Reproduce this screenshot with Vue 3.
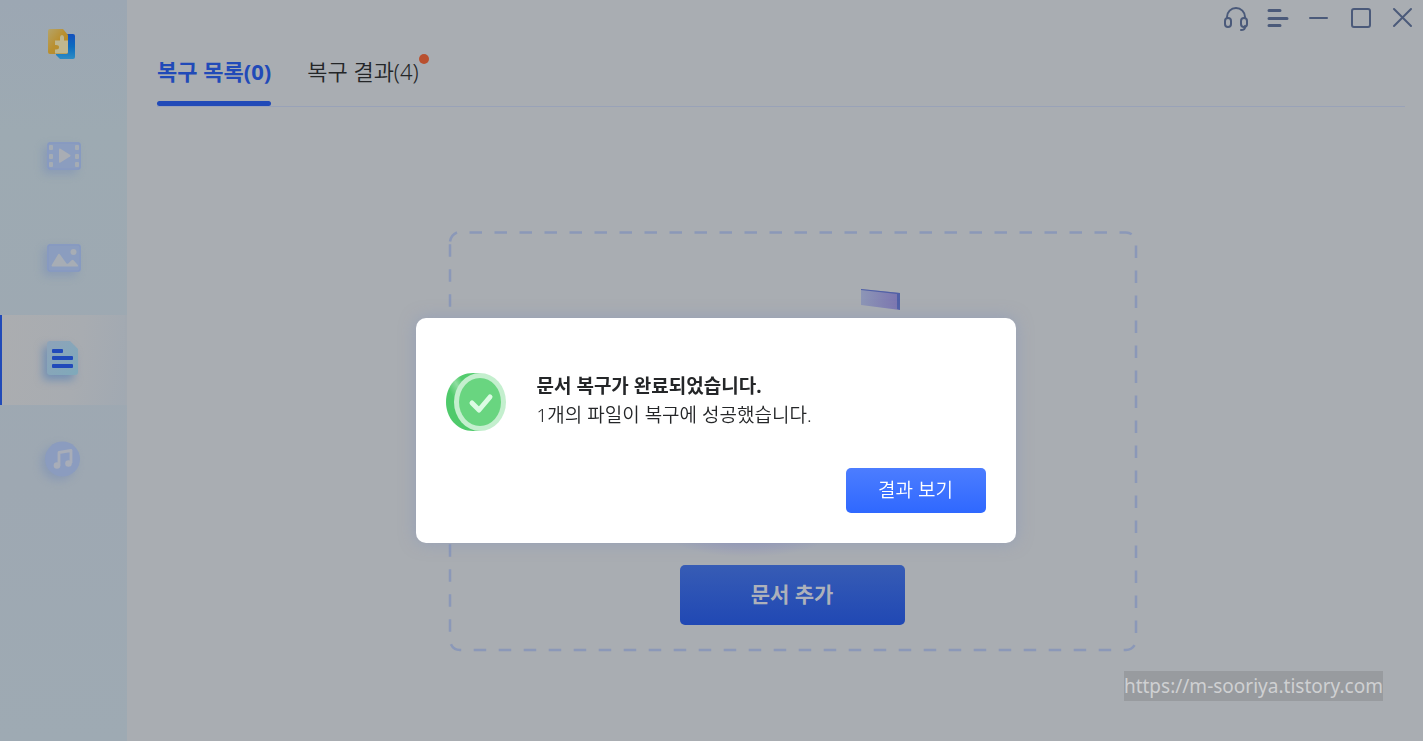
<script setup>
import { ref } from 'vue';

const listCount = ref(0);
const resultCount = ref(4);
const activeTab = ref('list');
const activeMenu = ref('document');
const showDialog = ref(true);

const menus = [
  { id: 'video', label: '비디오' },
  { id: 'photo', label: '사진' },
  { id: 'document', label: '문서' },
  { id: 'audio', label: '오디오' },
];

const openResult = () => {
  showDialog.value = false;
  activeTab.value = 'result';
};
</script>

<template>
  <div class="app">
    <aside class="sidebar">
      <svg class="logo" width="32" height="34" viewBox="2 0 32 34">
        <defs>
          <linearGradient id="logo-blue" x1="0" y1="0" x2="0" y2="1">
            <stop offset="0" stop-color="#1450bd" />
            <stop offset="0.5" stop-color="#0b6bc0" />
            <stop offset="1" stop-color="#2d8cc4" />
          </linearGradient>
          <linearGradient id="logo-gold" x1="0" y1="0" x2="1" y2="1">
            <stop offset="0" stop-color="#b5a469" />
            <stop offset="0.5" stop-color="#b98f2f" />
            <stop offset="1" stop-color="#b88a28" />
          </linearGradient>
        </defs>
        <path d="M12 6h15q2 0 2 2v21q0 2-2 2H14l-4-4V9z" fill="url(#logo-blue)" />
        <path d="M4 1h13l5 6v17q0 2-2 2H4q-2 0-2-2V3q0-2 2-2z" fill="url(#logo-gold)" />
        <path d="M9 12.500h5V9.500q0-2.500 2-2.500t2 2.500v3h4V24q0 1.500-1.500 1.500H9v-4h1q3 0 3-2.200T10 17H9z" fill="#beb68f" />
      </svg>

      <nav class="menu">
        <button
          v-for="menu in menus"
          :key="menu.id"
          class="menu-item"
          :class="{ active: activeMenu === menu.id }"
          :aria-label="menu.label"
          @click="activeMenu = menu.id"
        >
          <svg v-if="menu.id === 'video'" class="menu-icon" width="36" height="36" viewBox="0 0 36 36">
            <rect x="1" y="4" width="34" height="28" rx="3" fill="#8b9dbf" />
            <rect x="2" y="5" width="32" height="26" rx="2" fill="none" stroke="#8497c2" />
            <path d="M13 11.500q0-1.500 1.500-.8l9.500 6q1.300.9 0 1.800l-9.500 6Q13 25.300 13 24z" fill="#a9adb4" />
            <g fill="#a5acb4">
              <rect x="3" y="7" width="4" height="5" rx="1" />
              <rect x="3" y="16" width="4" height="5" rx="1" />
              <rect x="3" y="24" width="4" height="5" rx="1" />
              <rect x="29" y="7" width="4" height="5" rx="1" />
              <rect x="29" y="16" width="4" height="5" rx="1" />
              <rect x="29" y="24" width="4" height="5" rx="1" />
            </g>
          </svg>
          <svg v-else-if="menu.id === 'photo'" class="menu-icon" width="36" height="36" viewBox="0 0 36 36">
            <rect x="1" y="4" width="34" height="28" rx="3" fill="#8b9dbf" />
            <rect x="2" y="5" width="32" height="26" rx="2" fill="none" stroke="#8497c2" />
            <circle cx="27.500" cy="12" r="3" fill="#a7adb5" />
            <path d="M6 26.500q-1-.5 0-2l6-10q1-1.500 2 0l6.500 9q1 .8 2-.2l3-3q1.200-1 2.300.2l4 4.500q1 1.500-.5 1.500z" fill="#a7adb5" />
          </svg>
          <svg v-else-if="menu.id === 'document'" class="menu-icon strong" width="36" height="36" viewBox="0 0 36 36">
            <defs>
              <linearGradient id="doc" x1="0" y1="0" x2="1" y2="1">
                <stop offset="0" stop-color="#8ea3b9" />
                <stop offset="1" stop-color="#7fa9ba" />
              </linearGradient>
            </defs>
            <path d="M4 -1h20l8 8v23q0 3-3 3H4q-3 0-3-3V2q0-3 3-3z" fill="url(#doc)" />
            <g fill="#214aba">
              <rect x="6" y="7" width="11" height="4" rx="1" />
              <rect x="6" y="14" width="21" height="4" rx="1" />
              <rect x="6" y="22" width="21" height="4" rx="1" />
            </g>
          </svg>
          <svg v-else class="menu-icon" width="36" height="36" viewBox="0 0 36 36">
            <circle cx="16.500" cy="15" r="17.500" fill="#8b9cbf" />
            <path d="M13 21.500V8.500l12-2V19" fill="none" stroke="#a8adb8" stroke-width="2.800" stroke-linejoin="round" />
            <circle cx="11" cy="21.500" r="3.300" fill="#a8adb8" />
            <circle cx="22.500" cy="19.500" r="3.300" fill="#a8adb8" />
          </svg>
        </button>
      </nav>
    </aside>

    <main class="content">
      <div class="window-controls">
        <button aria-label="고객 지원">
          <svg width="26" height="26" viewBox="0 0 26 26">
            <path d="M5 13V12a9 9 0 0 1 18 0v1" />
            <rect x="3" y="13" width="6" height="9" rx="3" />
            <rect x="19" y="13" width="6" height="9" rx="3" />
            <path d="M23 21v1q0 3-4 3" />
          </svg>
        </button>
        <button aria-label="메뉴">
          <svg width="26" height="26" viewBox="0 0 26 26">
            <path d="M5 5.500h11M5 13.500h18M5 20.500h11" stroke-width="3" />
          </svg>
        </button>
        <button aria-label="최소화">
          <svg width="26" height="26" viewBox="0 0 26 26"><path d="M4 13h17" /></svg>
        </button>
        <button aria-label="최대화">
          <svg width="26" height="26" viewBox="0 0 26 26"><rect x="4" y="4" width="18" height="18" rx="2" /></svg>
        </button>
        <button aria-label="닫기">
          <svg width="26" height="26" viewBox="0 0 26 26"><path d="M4 4l17 17M21 4L4 21" /></svg>
        </button>
      </div>

      <div class="tabs">
        <button class="tab" :class="{ active: activeTab === 'list' }" @click="activeTab = 'list'">
          복구 목록({{ listCount }})
        </button>
        <button class="tab" :class="{ active: activeTab === 'result' }" @click="activeTab = 'result'">
          복구 결과({{ resultCount }})
          <span class="dot"></span>
        </button>
      </div>

      <section class="drop-zone">
        <svg class="drop-border" viewBox="0 0 688 420">
          <path d="M2 10.500Q3 4 9 1.500" />
          <path d="M21.500 1.500H678a10 10 0 0 1 10 10V409a10 10 0 0 1 -10 10H12a10 10 0 0 1 -10 -10V12" stroke-dasharray="12.500" />
        </svg>
        <svg class="illustration" width="240" height="284" viewBox="0 0 240 284">
          <defs>
            <linearGradient id="ribbon">
              <stop offset="0" stop-color="#8d96b6" />
              <stop offset="1" stop-color="#7b74b0" />
            </linearGradient>
            <radialGradient id="floor">
              <stop offset="0" stop-color="#8f8fb8" />
              <stop offset="1" stop-color="#8f8fb8" stop-opacity="0" />
            </radialGradient>
          </defs>
          <ellipse cx="76" cy="250" rx="85" ry="26" fill="url(#floor)" />
          <path d="M189 8l39 4v17l-39-5z" fill="url(#ribbon)" />
          <path d="M189 8l39 4v17l-3-1V13l-36-4z" fill="#5060a6" />
        </svg>
        <button class="add-button">문서 추가</button>
      </section>

      <a class="site-link" href="https://m-sooriya.tistory.com">https://m-sooriya.tistory.com</a>
    </main>

    <div v-if="showDialog" class="overlay">
      <div class="dialog" role="dialog" aria-labelledby="dialog-title">
        <div class="message">
          <svg width="60" height="60" viewBox="0 0 60 60">
            <defs>
              <linearGradient id="coin" x1="0" y1="1" x2="1" y2="0">
                <stop offset="0.4" stop-color="#4fca6b" />
                <stop offset="0.56" stop-color="#8fdda0" />
                <stop offset="0.68" stop-color="#52cc6d" />
              </linearGradient>
            </defs>
            <path d="M34 1H27C11 1 0 14 0 30s11 29 27 29h7z" fill="url(#coin)" />
            <ellipse cx="34" cy="30" rx="26" ry="29" fill="#c4efce" />
            <ellipse cx="34" cy="30" rx="21" ry="24" fill="#69d580" />
            <path d="M26 31l7 7 11-13" fill="none" stroke="#dcfbe4" stroke-width="5" stroke-linecap="round" stroke-linejoin="round" />
          </svg>
          <div>
            <h2 id="dialog-title">문서 복구가 완료되었습니다.</h2>
            <p>1개의 파일이 복구에 성공했습니다.</p>
          </div>
        </div>
        <button class="result-button" @click="openResult">결과 보기</button>
      </div>
    </div>
  </div>
</template>

<style>
body {
  background: #a9adb2;
}
</style>

<style scoped>
.app {
  display: flex;
  min-height: 100vh;
  background: #a9adb2;
  color: #242628;
  font-family: "Noto Sans", "Noto Sans CJK KR", sans-serif;
}

button {
  border: none;
  padding: 0;
  background: none;
  font-family: inherit;
  color: inherit;
  cursor: pointer;
}

svg {
  display: block;
}

.sidebar {
  flex: 0 0 127px;
  display: flex;
  flex-direction: column;
  align-items: center;
  padding-top: 28px;
  background: linear-gradient(#9ca7b3, #9daab2 18%, #9ea8b2 65%, #9eaab3);
}

.menu {
  display: flex;
  flex-direction: column;
  gap: 12px;
  width: 100%;
  margin-top: 49px;
}

.menu-item {
  display: flex;
  align-items: center;
  justify-content: center;
  height: 90px;
  border-left: 2px solid transparent;
  border-right: 2px solid transparent;
}

.menu-item.active {
  border-left-color: #214ab8;
  border-right-color: #a2a9b1;
  background: linear-gradient(100deg, #abadb0, #a8acb1 60%, #a1a9b2);
}

.menu-icon {
  overflow: visible;
  filter: drop-shadow(-4px 4px 4px rgba(110, 135, 185, 0.4));
}

.menu-icon.strong {
  filter: drop-shadow(-4px 5px 4px rgba(80, 125, 180, 0.6));
}

.content {
  flex: 1;
  display: flex;
  flex-direction: column;
  padding: 0 18px 40px 30px;
}

.window-controls {
  display: flex;
  align-items: flex-start;
  justify-content: flex-end;
  gap: 16px;
  height: 36px;
  padding-top: 5px;
  margin-right: -11px;
  box-sizing: border-box;
}

.window-controls svg {
  fill: none;
  stroke: #4b5a7a;
  stroke-width: 2;
  stroke-linecap: round;
  stroke-linejoin: round;
}

.tabs {
  display: flex;
  gap: 36px;
  height: 71px;
  border-bottom: 1px solid #99a2b8;
  box-sizing: border-box;
}

.tab {
  position: relative;
  height: 70px;
  padding-bottom: 3px;
  font-size: 22px;
  font-weight: 350;
}

.tab.active {
  color: #214ab8;
  font-weight: bold;
}

.tab.active::after {
  content: "";
  position: absolute;
  left: 0;
  right: 0;
  bottom: 0;
  height: 5px;
  border-radius: 3px;
  background: #214ab8;
}

.dot {
  position: absolute;
  top: 18px;
  right: -10px;
  width: 10px;
  height: 10px;
  border-radius: 50%;
  background: #b9502f;
}

.drop-zone {
  position: relative;
  align-self: center;
  display: flex;
  flex-direction: column;
  align-items: center;
  width: 688px;
  max-width: 100%;
  margin: 124px 0 20px 22px;
  padding: 50px 0 26px;
  box-sizing: border-box;
}

.drop-border {
  position: absolute;
  inset: 0;
  width: 100%;
  height: 100%;
  overflow: visible;
  fill: none;
  stroke: #8b98b8;
  stroke-width: 2.500;
}

.add-button {
  position: relative;
  width: 225px;
  height: 60px;
  padding-bottom: 4px;
  border-radius: 5px;
  background: linear-gradient(#375cb5, #2048b4);
  color: #adb1ba;
  font-size: 21px;
  font-weight: bold;
}

.site-link {
  align-self: flex-end;
  margin-right: 22px;
  background: #989b9f;
  color: #cfd0d2;
  font-size: 19px;
  line-height: 30px;
  text-decoration: none;
}

.overlay {
  position: fixed;
  inset: 0;
  display: flex;
  align-items: flex-start;
  justify-content: center;
  padding: 318px 0 0 8px;
}

.dialog {
  display: flex;
  flex-direction: column;
  width: 600px;
  padding: 54px 30px 30px;
  border-radius: 10px;
  background: #ffffff;
  box-shadow: 0 0 16px rgba(130, 145, 190, 0.5);
  box-sizing: border-box;
}

.message {
  display: flex;
  gap: 31px;
}

.message h2,
.message p {
  margin: 0;
  font-size: 19px;
  line-height: 29px;
}

.message p {
  font-weight: 350;
}

.result-button {
  align-self: flex-end;
  width: 140px;
  height: 45px;
  margin-top: 36px;
  padding-bottom: 4px;
  border-radius: 5px;
  background: linear-gradient(#4c7dff, #2f68ff);
  color: #ffffff;
  font-size: 19px;
  font-weight: 350;
}
</style>
